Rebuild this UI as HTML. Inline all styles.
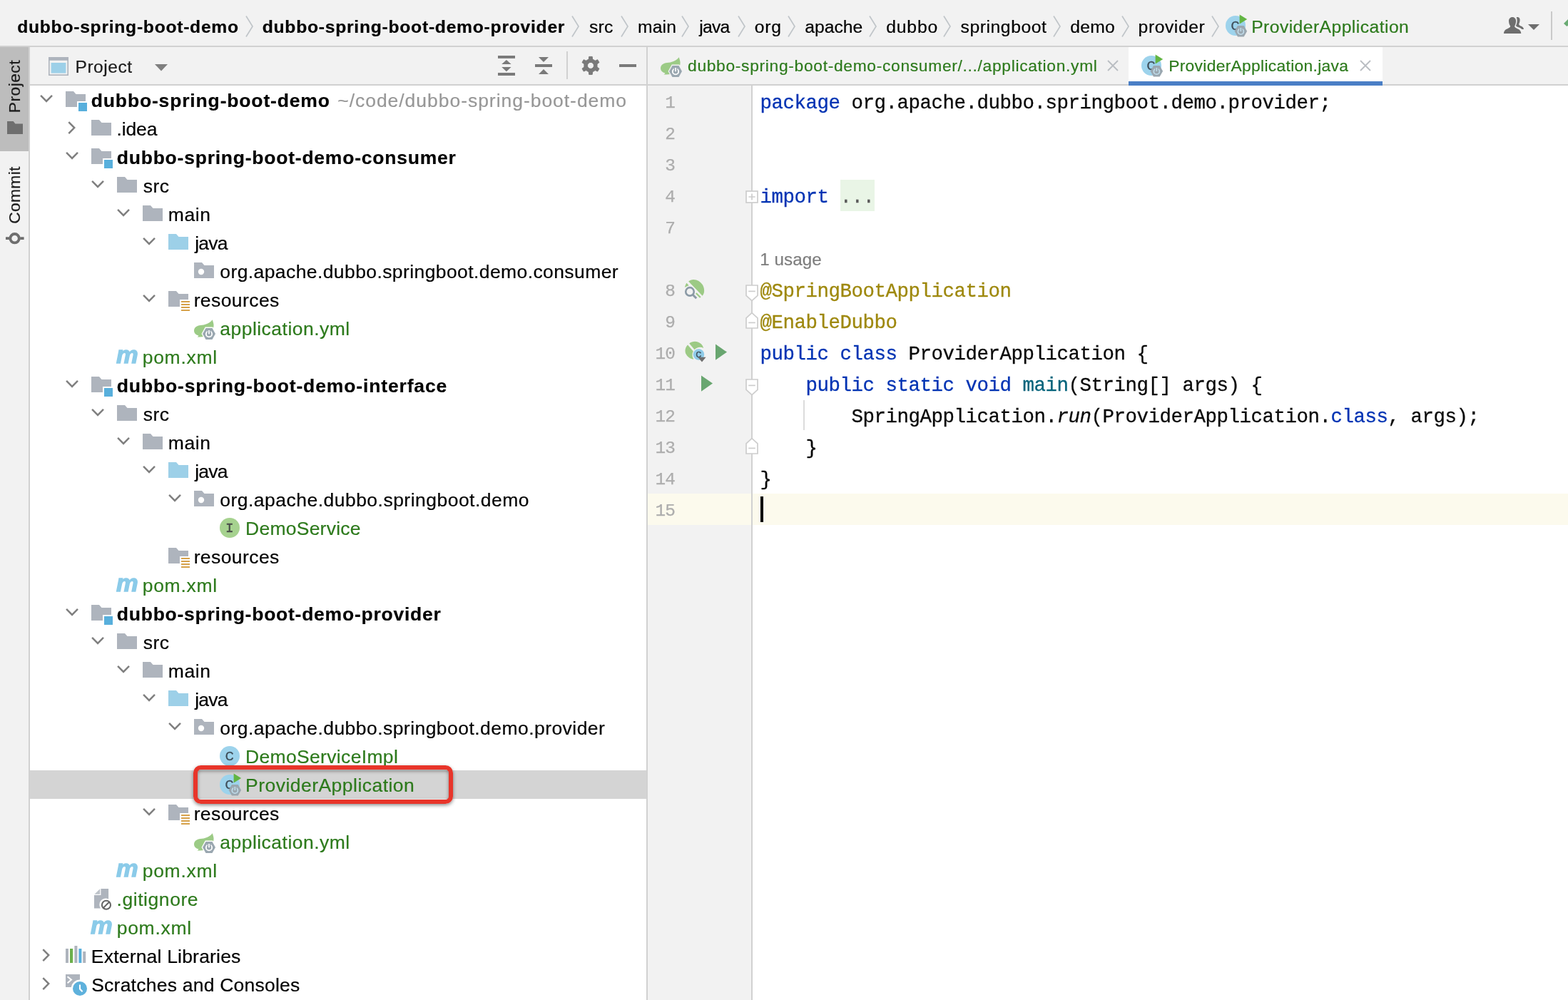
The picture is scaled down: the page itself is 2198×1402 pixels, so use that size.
<!DOCTYPE html>
<html lang="en"><head><meta charset="utf-8"><title>dubbo-spring-boot-demo – ProviderApplication.java</title>
<style>
html,body{margin:0;padding:0}
body{width:2198px;height:1402px;position:relative;overflow:hidden;background:#fff;font-family:"Liberation Sans",sans-serif;}
#r{position:absolute;left:0;top:0;width:2198px;height:1402px;overflow:hidden;will-change:transform}
#r>div,#r>span,#r>svg{position:absolute;display:block}
.t{white-space:pre;line-height:40px;height:40px;-webkit-text-stroke:0.2px}
.c,.n{white-space:pre;line-height:44px;height:44px;font-family:"Liberation Mono",monospace;font-size:27.4px;letter-spacing:-0.435px}
.c span{-webkit-text-stroke:0.3px}
.n{color:#adadad;-webkit-text-stroke:0.25px;font-size:24.4px;letter-spacing:-0.743px}
svg{overflow:visible}
</style></head><body><div id="r">
<div style="left:0px;top:0px;width:2198px;height:64px;background:#f2f2f2;"></div>
<div style="left:0px;top:64px;width:2198px;height:2px;background:#d1d1d1;"></div>
<div style="left:0px;top:66px;width:40px;height:1336px;background:#f2f2f2;"></div>
<div style="left:0px;top:66px;width:40px;height:146px;background:#bdbdbd;"></div>
<div style="left:40px;top:66px;width:2px;height:1336px;background:#d1d1d1;"></div>
<div style="left:42px;top:66px;width:864px;height:52px;background:#f2f2f2;"></div>
<div style="left:42px;top:118px;width:864px;height:2px;background:#d1d1d1;"></div>
<div style="left:906px;top:66px;width:2px;height:1336px;background:#d1d1d1;"></div>
<div style="left:908px;top:66px;width:1290px;height:52px;background:#f2f2f2;"></div>
<div style="left:908px;top:118px;width:1290px;height:2px;background:#d1d1d1;"></div>
<div style="left:1582px;top:66px;width:356px;height:48px;background:#fff;"></div>
<div style="left:1582px;top:114px;width:356px;height:6px;background:#4a7fc6;"></div>
<div style="left:908px;top:120px;width:145px;height:1282px;background:#f2f2f2;"></div>
<div style="left:1053px;top:120px;width:2px;height:1282px;background:#d1d1d1;"></div>
<div style="left:908px;top:692px;width:145px;height:44px;background:#fcfaed;"></div>
<div style="left:1055px;top:692px;width:1143px;height:44px;background:#fcfaed;"></div>
<div style="left:1066px;top:696px;width:4px;height:36px;background:#000;"></div>
<span class="t" style="left:24.19px;top:17.80px;font-size:24.7px;letter-spacing:0.720px;color:#000;font-weight:700;">dubbo-spring-boot-demo</span>
<svg style="left:344px;top:22px;" width="11" height="30" viewBox="0 0 11 30"><path d="M1 0.5 L10 15 L1 29.5" fill="none" stroke="#c0c5c9" stroke-width="1.7"/></svg>
<span class="t" style="left:367.69px;top:17.80px;font-size:24.7px;letter-spacing:0.733px;color:#000;font-weight:700;">dubbo-spring-boot-demo-provider</span>
<svg style="left:801.2px;top:22px;" width="11" height="30" viewBox="0 0 11 30"><path d="M1 0.5 L10 15 L1 29.5" fill="none" stroke="#c0c5c9" stroke-width="1.7"/></svg>
<span class="t" style="left:826.01px;top:17.80px;font-size:24.7px;letter-spacing:0.257px;color:#000;">src</span>
<svg style="left:870px;top:22px;" width="11" height="30" viewBox="0 0 11 30"><path d="M1 0.5 L10 15 L1 29.5" fill="none" stroke="#c0c5c9" stroke-width="1.7"/></svg>
<span class="t" style="left:894.06px;top:17.80px;font-size:24.7px;letter-spacing:0.103px;color:#000;">main</span>
<svg style="left:955.4px;top:22px;" width="11" height="30" viewBox="0 0 11 30"><path d="M1 0.5 L10 15 L1 29.5" fill="none" stroke="#c0c5c9" stroke-width="1.7"/></svg>
<span class="t" style="left:980.30px;top:17.80px;font-size:24.7px;letter-spacing:-0.772px;color:#000;">java</span>
<svg style="left:1034px;top:22px;" width="11" height="30" viewBox="0 0 11 30"><path d="M1 0.5 L10 15 L1 29.5" fill="none" stroke="#c0c5c9" stroke-width="1.7"/></svg>
<span class="t" style="left:1057.66px;top:17.80px;font-size:24.7px;letter-spacing:0.815px;color:#000;">org</span>
<svg style="left:1103.6px;top:22px;" width="11" height="30" viewBox="0 0 11 30"><path d="M1 0.5 L10 15 L1 29.5" fill="none" stroke="#c0c5c9" stroke-width="1.7"/></svg>
<span class="t" style="left:1128.15px;top:17.80px;font-size:24.7px;letter-spacing:0.042px;color:#000;">apache</span>
<svg style="left:1218px;top:22px;" width="11" height="30" viewBox="0 0 11 30"><path d="M1 0.5 L10 15 L1 29.5" fill="none" stroke="#c0c5c9" stroke-width="1.7"/></svg>
<span class="t" style="left:1242.16px;top:17.80px;font-size:24.7px;letter-spacing:0.872px;color:#000;">dubbo</span>
<svg style="left:1322px;top:22px;" width="11" height="30" viewBox="0 0 11 30"><path d="M1 0.5 L10 15 L1 29.5" fill="none" stroke="#c0c5c9" stroke-width="1.7"/></svg>
<span class="t" style="left:1346.51px;top:17.80px;font-size:24.7px;letter-spacing:0.569px;color:#000;">springboot</span>
<svg style="left:1476px;top:22px;" width="11" height="30" viewBox="0 0 11 30"><path d="M1 0.5 L10 15 L1 29.5" fill="none" stroke="#c0c5c9" stroke-width="1.7"/></svg>
<span class="t" style="left:1500.16px;top:17.80px;font-size:24.7px;letter-spacing:0.296px;color:#000;">demo</span>
<svg style="left:1572px;top:22px;" width="11" height="30" viewBox="0 0 11 30"><path d="M1 0.5 L10 15 L1 29.5" fill="none" stroke="#c0c5c9" stroke-width="1.7"/></svg>
<span class="t" style="left:1595.61px;top:17.80px;font-size:24.7px;letter-spacing:0.552px;color:#000;">provider</span>
<svg style="left:1698px;top:22px;" width="11" height="30" viewBox="0 0 11 30"><path d="M1 0.5 L10 15 L1 29.5" fill="none" stroke="#c0c5c9" stroke-width="1.7"/></svg>
<svg style="left:1718px;top:20px;" width="32" height="34" viewBox="0 0 32 34"><path d="M14 2 A14 14 0 1 0 28 16 L18 16 L18 2.6 A14 14 0 0 0 14 2 Z" fill="#9dd3ec" opacity="0"/><circle cx="14" cy="16" r="14" fill="#9dd3ec"/><text x="13.4" y="21.6" text-anchor="middle" font-family="Liberation Sans, sans-serif" font-size="15.8" fill="#3f4e59" stroke="#3f4e59" stroke-width="0.5">C</text><path d="M19.6 0.4 L30.2 7 L19.6 13.6 Z" fill="#62b543" stroke="#f2f2f2" stroke-width="0"/><g transform="translate(12.6,16) scale(0.97)"><path d="M4.5 0 H13.5 L18 8 L13.5 16 H4.5 L0 8 Z" fill="#9aa7b0"/><circle cx="9" cy="8.4" r="4.15" fill="none" stroke="#bfdcea" stroke-width="1.8"/><path d="M9 2.4 V8.6" stroke="#9aa7b0" stroke-width="4.6"/><path d="M9 3.1 V8.3" stroke="#bfdcea" stroke-width="1.7"/></g></svg>
<span class="t" style="left:1754.17px;top:17.80px;font-size:24.7px;letter-spacing:0.440px;color:#2d7a1c;">ProviderApplication</span>
<svg style="left:2107px;top:23px;" width="30" height="25" viewBox="0 0 30 25"><path d="M18.6 1.3 C19.4 1 20.2 0.9 20.8 1 C22.8 1.2 23.8 3 23.6 5.6 C23.4 8 22.8 9.6 22.2 10.6 C22.2 12 23.2 12.8 25 13.6 C27.4 14.6 28.8 15.8 29 18 H26.4 C25.4 16.8 23.8 16 21.6 15.2 C19.6 14.4 18.4 14 18 13 C18.8 11.4 19.4 9.6 19.6 7 C19.8 4.6 19.4 2.6 18.6 1.3 Z" fill="#6e6e6e"/><path d="M13.07 1 C16.2 1 18.3 3.4 18.1 7 C17.9 10 17.2 12 16.2 13.6 C16.2 15.4 17.4 16.2 20 17.2 C23.4 18.4 25 20.4 25.3 23.9 H0.9 C1.2 20.4 2.8 18.4 6.2 17.2 C8.8 16.2 10.2 15.4 10.2 13.6 C9 12 8.2 10 8 7 C7.8 3.4 9.9 1 13.07 1 Z" fill="#6e6e6e" stroke="#f2f2f2" stroke-width="1.1" paint-order="stroke"/></svg>
<svg style="left:2142px;top:34px;" width="16" height="8" viewBox="0 0 16 8"><path d="M0 0 H16 L8 8 Z" fill="#6e6e6e"/></svg>
<div style="left:2174px;top:16px;width:2px;height:40px;background:#c9c9c9;"></div>
<svg style="left:2190px;top:26px;" width="9" height="12" viewBox="0 0 9 12"><path d="M2 7.1 L8.5 0.6 V9.2 L6.4 11.1 Z" fill="#6aab73"/></svg>
<span class="t" style="left:0;top:0;transform-origin:0 0;transform:translate(0px,158.17px) rotate(-90deg);font-size:22.8px;letter-spacing:0.463px;color:#1a1a1a;line-height:40px;height:40px">Project</span>
<svg style="left:10px;top:170px;" width="22" height="18" viewBox="0 0 22 18"><path d="M0 0 H8.6 L11.4 3.6 H22 V18 H0 Z" fill="#6e6e6e"/></svg>
<span class="t" style="left:0;top:0;transform-origin:0 0;transform:translate(0px,313.66px) rotate(-90deg);font-size:22.8px;letter-spacing:0.299px;color:#1a1a1a;line-height:40px;height:40px">Commit</span>
<svg style="left:8px;top:326px;" width="26" height="16" viewBox="0 0 26 16"><circle cx="12.6" cy="8.2" r="6.2" fill="none" stroke="#6e6e6e" stroke-width="3.8"/><path d="M0 8.2 H5 M20.2 8.2 H25.6" stroke="#6e6e6e" stroke-width="3.8"/></svg>
<svg style="left:68px;top:80px;" width="28" height="26" viewBox="0 0 28 26"><rect x="0" y="0" width="28" height="26" fill="#aeb4bd"/><rect x="1.6" y="4.8" width="24.8" height="19.6" fill="#f2f2f2"/><rect x="3.6" y="8" width="20.8" height="14.6" fill="#9dd0e8"/></svg>
<span class="t" style="left:105.48px;top:73.80px;font-size:24.6px;letter-spacing:0.523px;color:#1a1a1a;">Project</span>
<svg style="left:217px;top:90px;" width="18" height="10" viewBox="0 0 18 10"><path d="M0 0 H18 L9 9.4 Z" fill="#7f7f7f"/></svg>
<svg style="left:698px;top:78px;" width="24" height="28" viewBox="0 0 24 28"><rect x="0" y="0" width="24" height="3.9" fill="#7a7a7a"/><rect x="0" y="24" width="24" height="4" fill="#7a7a7a"/><path d="M5.2 12.1 L11.9 5.9 L18.6 12.1 Z M5.2 16 L11.9 22.2 L18.6 16 Z" fill="#7a7a7a"/></svg>
<svg style="left:750px;top:78px;" width="24" height="28" viewBox="0 0 24 28"><rect x="0" y="12" width="24" height="4" fill="#7a7a7a"/><path d="M5 1.9 H19 L12 8.9 Z M5 26 H19 L12 19.1 Z" fill="#7a7a7a"/></svg>
<div style="left:794px;top:72px;width:2px;height:39px;background:#d1d1d1;"></div>
<svg style="left:815px;top:79px;" width="26" height="26" viewBox="0 0 26 26"><path d="M10.71 0.40 L15.21 0.40 L15.55 3.97 L19.40 6.19 L22.66 4.70 L24.91 8.60 L21.99 10.68 L21.99 15.12 L24.91 17.20 L22.66 21.10 L19.40 19.61 L15.55 21.83 L15.21 25.40 L10.71 25.40 L10.37 21.83 L6.52 19.61 L3.26 21.10 L1.01 17.20 L3.93 15.12 L3.93 10.68 L1.01 8.60 L3.26 4.70 L6.52 6.19 L10.37 3.97 Z M17.46 12.9 A4.5 4.5 0 1 0 8.46 12.9 A4.5 4.5 0 1 0 17.46 12.9 Z" fill="#7a7a7a" fill-rule="evenodd" stroke="#7a7a7a" stroke-width="1" stroke-linejoin="round"/></svg>
<div style="left:868px;top:90px;width:24px;height:4px;background:#7a7a7a;"></div>
<div style="left:42px;top:1080px;width:864px;height:40px;background:#d4d4d4;"></div>
<svg style="left:56px;top:132px;" width="18" height="14" viewBox="0 0 18 14"><path d="M1.1 1.9 L9.05 9.9 L17 1.9" fill="none" stroke="#7f7f7f" stroke-width="2.5"/></svg>
<svg style="left:92px;top:128px;" width="32" height="30" viewBox="0 0 32 30"><path d="M0 0 H11 L14.5 4 H28 V14 H16 V22 H0 Z" fill="#aeb4bd"/><rect x="18" y="16" width="12" height="12" fill="#58afdc"/></svg>
<span class="t" style="left:127.81px;top:121.00px;font-size:26.5px;letter-spacing:0.842px;color:#000;font-weight:700;">dubbo-spring-boot-demo</span>
<span class="t" style="left:473.21px;top:121.00px;font-size:26.5px;letter-spacing:0.965px;color:#979797;">~/code/dubbo-spring-boot-demo</span>
<svg style="left:94px;top:170px;" width="14" height="18" viewBox="0 0 14 18"><path d="M2.3 1.1 L10.2 9.1 L2.3 17.1" fill="none" stroke="#7f7f7f" stroke-width="2.5"/></svg>
<svg style="left:128px;top:168px;" width="28" height="22" viewBox="0 0 28 22"><path d="M0 0 H11 L14.5 4 H28 V22 H0 Z" fill="#aeb4bd"/></svg>
<span class="t" style="left:163.48px;top:161.00px;font-size:26.5px;letter-spacing:-0.136px;color:#000;">.idea</span>
<svg style="left:92px;top:212px;" width="18" height="14" viewBox="0 0 18 14"><path d="M1.1 1.9 L9.05 9.9 L17 1.9" fill="none" stroke="#7f7f7f" stroke-width="2.5"/></svg>
<svg style="left:128px;top:208px;" width="32" height="30" viewBox="0 0 32 30"><path d="M0 0 H11 L14.5 4 H28 V14 H16 V22 H0 Z" fill="#aeb4bd"/><rect x="18" y="16" width="12" height="12" fill="#58afdc"/></svg>
<span class="t" style="left:163.81px;top:201.00px;font-size:26.5px;letter-spacing:0.769px;color:#000;font-weight:700;">dubbo-spring-boot-demo-consumer</span>
<svg style="left:128px;top:252px;" width="18" height="14" viewBox="0 0 18 14"><path d="M1.1 1.9 L9.05 9.9 L17 1.9" fill="none" stroke="#7f7f7f" stroke-width="2.5"/></svg>
<svg style="left:164px;top:248px;" width="28" height="22" viewBox="0 0 28 22"><path d="M0 0 H11 L14.5 4 H28 V22 H0 Z" fill="#aeb4bd"/></svg>
<span class="t" style="left:200.66px;top:241.00px;font-size:26.5px;letter-spacing:0.556px;color:#000;">src</span>
<svg style="left:164px;top:292px;" width="18" height="14" viewBox="0 0 18 14"><path d="M1.1 1.9 L9.05 9.9 L17 1.9" fill="none" stroke="#7f7f7f" stroke-width="2.5"/></svg>
<svg style="left:200px;top:288px;" width="28" height="22" viewBox="0 0 28 22"><path d="M0 0 H11 L14.5 4 H28 V22 H0 Z" fill="#aeb4bd"/></svg>
<span class="t" style="left:235.64px;top:281.00px;font-size:26.5px;letter-spacing:0.681px;color:#000;">main</span>
<svg style="left:200px;top:332px;" width="18" height="14" viewBox="0 0 18 14"><path d="M1.1 1.9 L9.05 9.9 L17 1.9" fill="none" stroke="#7f7f7f" stroke-width="2.5"/></svg>
<svg style="left:236px;top:328px;" width="28" height="22" viewBox="0 0 28 22"><path d="M0 0 H11 L14.5 4 H28 V22 H0 Z" fill="#9dd0e8"/></svg>
<span class="t" style="left:273.25px;top:321.00px;font-size:26.5px;letter-spacing:-0.820px;color:#000;">java</span>
<svg style="left:272px;top:368px;" width="28" height="22" viewBox="0 0 28 22"><path d="M0 0 H11 L14.5 4 H28 V22 H0 Z" fill="#aeb4bd"/><circle cx="10" cy="13" r="4.2" fill="#fff"/></svg>
<span class="t" style="left:308.29px;top:361.00px;font-size:26.5px;letter-spacing:0.405px;color:#000;">org.apache.dubbo.springboot.demo.consumer</span>
<svg style="left:200px;top:412px;" width="18" height="14" viewBox="0 0 18 14"><path d="M1.1 1.9 L9.05 9.9 L17 1.9" fill="none" stroke="#7f7f7f" stroke-width="2.5"/></svg>
<svg style="left:236px;top:408px;" width="32" height="30" viewBox="0 0 32 30"><path d="M0 0 H11 L14.5 4 H28 V12 H16 V22 H0 Z" fill="#aeb4bd"/><rect x="18" y="14" width="12" height="2" fill="#d6a14a"/><rect x="18" y="18" width="12" height="2" fill="#d6a14a"/><rect x="18" y="22" width="12" height="2" fill="#d6a14a"/><rect x="18" y="26" width="12" height="2" fill="#d6a14a"/></svg>
<span class="t" style="left:271.64px;top:401.00px;font-size:26.5px;letter-spacing:0.421px;color:#000;">resources</span>
<svg style="left:272px;top:448px;" width="32" height="30" viewBox="0 0 32 30"><path d="M25.7 0.2 C26.6 3 28.2 6.5 27.4 10.4 C26.5 13 25 15 23 17 L17 23.6 C13 24.6 9 24.4 5.5 24.6 L4.6 24.6 C5.6 24 6.2 23.4 6.4 22.6 C2.5 21.6 0 19 0 15.6 C0.2 11 4 8.6 9 8 C15 7.4 21.6 6 25.7 0.2 Z" fill="#9ccb86"/><g transform="translate(12,11.9) scale(1)"><path d="M4.5 0 H13.5 L18 8 L13.5 16 H4.5 L0 8 Z" fill="#9aa7b0" stroke="#fff" stroke-width="2.6" paint-order="stroke"/><circle cx="9" cy="8.4" r="4.15" fill="none" stroke="#fff" stroke-width="1.8"/><path d="M9 2.4 V8.6" stroke="#9aa7b0" stroke-width="4.6"/><path d="M9 3.1 V8.3" stroke="#fff" stroke-width="1.7"/></g></svg>
<span class="t" style="left:308.27px;top:441.00px;font-size:26.5px;letter-spacing:0.473px;color:#2d7a1c;">application.yml</span>
<span class="t" style="left:163.4px;top:477.8px;font-size:33px;font-weight:700;font-style:italic;color:#8bcbe9;-webkit-text-stroke:1.3px #8bcbe9;letter-spacing:0;transform-origin:0 50%;transform:scaleX(1.045)">m</span>
<span class="t" style="left:199.69px;top:481.00px;font-size:26.5px;letter-spacing:0.726px;color:#2d7a1c;">pom.xml</span>
<svg style="left:92px;top:532px;" width="18" height="14" viewBox="0 0 18 14"><path d="M1.1 1.9 L9.05 9.9 L17 1.9" fill="none" stroke="#7f7f7f" stroke-width="2.5"/></svg>
<svg style="left:128px;top:528px;" width="32" height="30" viewBox="0 0 32 30"><path d="M0 0 H11 L14.5 4 H28 V14 H16 V22 H0 Z" fill="#aeb4bd"/><rect x="18" y="16" width="12" height="12" fill="#58afdc"/></svg>
<span class="t" style="left:163.81px;top:521.00px;font-size:26.5px;letter-spacing:0.863px;color:#000;font-weight:700;">dubbo-spring-boot-demo-interface</span>
<svg style="left:128px;top:572px;" width="18" height="14" viewBox="0 0 18 14"><path d="M1.1 1.9 L9.05 9.9 L17 1.9" fill="none" stroke="#7f7f7f" stroke-width="2.5"/></svg>
<svg style="left:164px;top:568px;" width="28" height="22" viewBox="0 0 28 22"><path d="M0 0 H11 L14.5 4 H28 V22 H0 Z" fill="#aeb4bd"/></svg>
<span class="t" style="left:200.66px;top:561.00px;font-size:26.5px;letter-spacing:0.556px;color:#000;">src</span>
<svg style="left:164px;top:612px;" width="18" height="14" viewBox="0 0 18 14"><path d="M1.1 1.9 L9.05 9.9 L17 1.9" fill="none" stroke="#7f7f7f" stroke-width="2.5"/></svg>
<svg style="left:200px;top:608px;" width="28" height="22" viewBox="0 0 28 22"><path d="M0 0 H11 L14.5 4 H28 V22 H0 Z" fill="#aeb4bd"/></svg>
<span class="t" style="left:235.64px;top:601.00px;font-size:26.5px;letter-spacing:0.681px;color:#000;">main</span>
<svg style="left:200px;top:652px;" width="18" height="14" viewBox="0 0 18 14"><path d="M1.1 1.9 L9.05 9.9 L17 1.9" fill="none" stroke="#7f7f7f" stroke-width="2.5"/></svg>
<svg style="left:236px;top:648px;" width="28" height="22" viewBox="0 0 28 22"><path d="M0 0 H11 L14.5 4 H28 V22 H0 Z" fill="#9dd0e8"/></svg>
<span class="t" style="left:273.25px;top:641.00px;font-size:26.5px;letter-spacing:-0.820px;color:#000;">java</span>
<svg style="left:236px;top:692px;" width="18" height="14" viewBox="0 0 18 14"><path d="M1.1 1.9 L9.05 9.9 L17 1.9" fill="none" stroke="#7f7f7f" stroke-width="2.5"/></svg>
<svg style="left:272px;top:688px;" width="28" height="22" viewBox="0 0 28 22"><path d="M0 0 H11 L14.5 4 H28 V22 H0 Z" fill="#aeb4bd"/><circle cx="10" cy="13" r="4.2" fill="#fff"/></svg>
<span class="t" style="left:308.29px;top:681.00px;font-size:26.5px;letter-spacing:0.477px;color:#000;">org.apache.dubbo.springboot.demo</span>
<svg style="left:308px;top:726px;" width="28" height="28" viewBox="0 0 28 28"><circle cx="14" cy="14" r="14" fill="#a6d28f"/><text x="13.8" y="20.099999999999998" text-anchor="middle" font-family="Liberation Mono, monospace" font-size="18.6" fill="#4b504b" stroke="#4b504b" stroke-width="0.6">I</text></svg>
<span class="t" style="left:344.03px;top:721.00px;font-size:26.5px;letter-spacing:0.250px;color:#2d7a1c;">DemoService</span>
<svg style="left:236px;top:768px;" width="32" height="30" viewBox="0 0 32 30"><path d="M0 0 H11 L14.5 4 H28 V12 H16 V22 H0 Z" fill="#aeb4bd"/><rect x="18" y="14" width="12" height="2" fill="#d6a14a"/><rect x="18" y="18" width="12" height="2" fill="#d6a14a"/><rect x="18" y="22" width="12" height="2" fill="#d6a14a"/><rect x="18" y="26" width="12" height="2" fill="#d6a14a"/></svg>
<span class="t" style="left:271.64px;top:761.00px;font-size:26.5px;letter-spacing:0.421px;color:#000;">resources</span>
<span class="t" style="left:163.4px;top:797.8px;font-size:33px;font-weight:700;font-style:italic;color:#8bcbe9;-webkit-text-stroke:1.3px #8bcbe9;letter-spacing:0;transform-origin:0 50%;transform:scaleX(1.045)">m</span>
<span class="t" style="left:199.69px;top:801.00px;font-size:26.5px;letter-spacing:0.726px;color:#2d7a1c;">pom.xml</span>
<svg style="left:92px;top:852px;" width="18" height="14" viewBox="0 0 18 14"><path d="M1.1 1.9 L9.05 9.9 L17 1.9" fill="none" stroke="#7f7f7f" stroke-width="2.5"/></svg>
<svg style="left:128px;top:848px;" width="32" height="30" viewBox="0 0 32 30"><path d="M0 0 H11 L14.5 4 H28 V14 H16 V22 H0 Z" fill="#aeb4bd"/><rect x="18" y="16" width="12" height="12" fill="#58afdc"/></svg>
<span class="t" style="left:163.81px;top:841.00px;font-size:26.5px;letter-spacing:0.756px;color:#000;font-weight:700;">dubbo-spring-boot-demo-provider</span>
<svg style="left:128px;top:892px;" width="18" height="14" viewBox="0 0 18 14"><path d="M1.1 1.9 L9.05 9.9 L17 1.9" fill="none" stroke="#7f7f7f" stroke-width="2.5"/></svg>
<svg style="left:164px;top:888px;" width="28" height="22" viewBox="0 0 28 22"><path d="M0 0 H11 L14.5 4 H28 V22 H0 Z" fill="#aeb4bd"/></svg>
<span class="t" style="left:200.66px;top:881.00px;font-size:26.5px;letter-spacing:0.556px;color:#000;">src</span>
<svg style="left:164px;top:932px;" width="18" height="14" viewBox="0 0 18 14"><path d="M1.1 1.9 L9.05 9.9 L17 1.9" fill="none" stroke="#7f7f7f" stroke-width="2.5"/></svg>
<svg style="left:200px;top:928px;" width="28" height="22" viewBox="0 0 28 22"><path d="M0 0 H11 L14.5 4 H28 V22 H0 Z" fill="#aeb4bd"/></svg>
<span class="t" style="left:235.64px;top:921.00px;font-size:26.5px;letter-spacing:0.681px;color:#000;">main</span>
<svg style="left:200px;top:972px;" width="18" height="14" viewBox="0 0 18 14"><path d="M1.1 1.9 L9.05 9.9 L17 1.9" fill="none" stroke="#7f7f7f" stroke-width="2.5"/></svg>
<svg style="left:236px;top:968px;" width="28" height="22" viewBox="0 0 28 22"><path d="M0 0 H11 L14.5 4 H28 V22 H0 Z" fill="#9dd0e8"/></svg>
<span class="t" style="left:273.25px;top:961.00px;font-size:26.5px;letter-spacing:-0.820px;color:#000;">java</span>
<svg style="left:236px;top:1012px;" width="18" height="14" viewBox="0 0 18 14"><path d="M1.1 1.9 L9.05 9.9 L17 1.9" fill="none" stroke="#7f7f7f" stroke-width="2.5"/></svg>
<svg style="left:272px;top:1008px;" width="28" height="22" viewBox="0 0 28 22"><path d="M0 0 H11 L14.5 4 H28 V22 H0 Z" fill="#aeb4bd"/><circle cx="10" cy="13" r="4.2" fill="#fff"/></svg>
<span class="t" style="left:308.29px;top:1001.00px;font-size:26.5px;letter-spacing:0.451px;color:#000;">org.apache.dubbo.springboot.demo.provider</span>
<svg style="left:308px;top:1046px;" width="28" height="28" viewBox="0 0 28 28"><circle cx="14" cy="14" r="14" fill="#9dd3ec"/><text x="13.6" y="19.6" text-anchor="middle" font-family="Liberation Sans, sans-serif" font-size="15.8" fill="#3f4e59" stroke="#3f4e59" stroke-width="0.5">C</text></svg>
<span class="t" style="left:344.03px;top:1041.00px;font-size:26.5px;letter-spacing:0.331px;color:#2d7a1c;">DemoServiceImpl</span>
<svg style="left:308px;top:1084px;" width="32" height="34" viewBox="0 0 32 34"><path d="M14 2 A14 14 0 1 0 28 16 L18 16 L18 2.6 A14 14 0 0 0 14 2 Z" fill="#9dd3ec" opacity="0"/><circle cx="14" cy="16" r="14" fill="#9dd3ec"/><text x="13.4" y="21.6" text-anchor="middle" font-family="Liberation Sans, sans-serif" font-size="15.8" fill="#3f4e59" stroke="#3f4e59" stroke-width="0.5">C</text><path d="M19.6 0.4 L30.2 7 L19.6 13.6 Z" fill="#62b543" stroke="#f2f2f2" stroke-width="0"/><g transform="translate(12.6,16) scale(0.97)"><path d="M4.5 0 H13.5 L18 8 L13.5 16 H4.5 L0 8 Z" fill="#9aa7b0"/><circle cx="9" cy="8.4" r="4.15" fill="none" stroke="#bfdcea" stroke-width="1.8"/><path d="M9 2.4 V8.6" stroke="#9aa7b0" stroke-width="4.6"/><path d="M9 3.1 V8.3" stroke="#bfdcea" stroke-width="1.7"/></g></svg>
<span class="t" style="left:344.03px;top:1081.00px;font-size:26.5px;letter-spacing:0.471px;color:#2d7a1c;">ProviderApplication</span>
<svg style="left:200px;top:1132px;" width="18" height="14" viewBox="0 0 18 14"><path d="M1.1 1.9 L9.05 9.9 L17 1.9" fill="none" stroke="#7f7f7f" stroke-width="2.5"/></svg>
<svg style="left:236px;top:1128px;" width="32" height="30" viewBox="0 0 32 30"><path d="M0 0 H11 L14.5 4 H28 V12 H16 V22 H0 Z" fill="#aeb4bd"/><rect x="18" y="14" width="12" height="2" fill="#d6a14a"/><rect x="18" y="18" width="12" height="2" fill="#d6a14a"/><rect x="18" y="22" width="12" height="2" fill="#d6a14a"/><rect x="18" y="26" width="12" height="2" fill="#d6a14a"/></svg>
<span class="t" style="left:271.64px;top:1121.00px;font-size:26.5px;letter-spacing:0.421px;color:#000;">resources</span>
<svg style="left:272px;top:1168px;" width="32" height="30" viewBox="0 0 32 30"><path d="M25.7 0.2 C26.6 3 28.2 6.5 27.4 10.4 C26.5 13 25 15 23 17 L17 23.6 C13 24.6 9 24.4 5.5 24.6 L4.6 24.6 C5.6 24 6.2 23.4 6.4 22.6 C2.5 21.6 0 19 0 15.6 C0.2 11 4 8.6 9 8 C15 7.4 21.6 6 25.7 0.2 Z" fill="#9ccb86"/><g transform="translate(12,11.9) scale(1)"><path d="M4.5 0 H13.5 L18 8 L13.5 16 H4.5 L0 8 Z" fill="#9aa7b0" stroke="#fff" stroke-width="2.6" paint-order="stroke"/><circle cx="9" cy="8.4" r="4.15" fill="none" stroke="#fff" stroke-width="1.8"/><path d="M9 2.4 V8.6" stroke="#9aa7b0" stroke-width="4.6"/><path d="M9 3.1 V8.3" stroke="#fff" stroke-width="1.7"/></g></svg>
<span class="t" style="left:308.27px;top:1161.00px;font-size:26.5px;letter-spacing:0.473px;color:#2d7a1c;">application.yml</span>
<span class="t" style="left:163.4px;top:1197.8px;font-size:33px;font-weight:700;font-style:italic;color:#8bcbe9;-webkit-text-stroke:1.3px #8bcbe9;letter-spacing:0;transform-origin:0 50%;transform:scaleX(1.045)">m</span>
<span class="t" style="left:199.69px;top:1201.00px;font-size:26.5px;letter-spacing:0.726px;color:#2d7a1c;">pom.xml</span>
<svg style="left:132px;top:1246.2px;" width="26" height="30" viewBox="0 0 26 30"><path d="M9.4 0 H20.1 V14.6 A8.7 8.7 0 0 0 9 27.4 H0 V9 H9.4 Z" fill="#aeb4bd"/><path d="M0.4 7.7 H8.1 V0.3 Z" fill="#aeb4bd" opacity=".8"/><circle cx="16.95" cy="22.7" r="6.05" fill="none" stroke="#646464" stroke-width="2"/><path d="M12.7 26.95 L21.2 18.45" stroke="#646464" stroke-width="2"/></svg>
<span class="t" style="left:163.48px;top:1241.00px;font-size:26.5px;letter-spacing:0.565px;color:#2d7a1c;">.gitignore</span>
<span class="t" style="left:127.4px;top:1277.8px;font-size:33px;font-weight:700;font-style:italic;color:#8bcbe9;-webkit-text-stroke:1.3px #8bcbe9;letter-spacing:0;transform-origin:0 50%;transform:scaleX(1.045)">m</span>
<span class="t" style="left:163.69px;top:1281.00px;font-size:26.5px;letter-spacing:0.726px;color:#2d7a1c;">pom.xml</span>
<svg style="left:58px;top:1330px;" width="14" height="18" viewBox="0 0 14 18"><path d="M2.3 1.1 L10.2 9.1 L2.3 17.1" fill="none" stroke="#7f7f7f" stroke-width="2.5"/></svg>
<svg style="left:92px;top:1326px;" width="30" height="26" viewBox="0 0 30 26"><rect x="0" y="4" width="4" height="20" fill="#aeb4bd"/><rect x="6" y="4" width="4.2" height="20" fill="#6cb04c"/><rect x="12.4" y="0" width="4" height="24" fill="#aeb4bd"/><rect x="18.4" y="4" width="4" height="20" fill="#58afdc"/><rect x="24.2" y="8" width="4" height="16" fill="#aeb4bd"/></svg>
<span class="t" style="left:127.83px;top:1321.00px;font-size:26.5px;letter-spacing:0.196px;color:#000;">External Libraries</span>
<svg style="left:58px;top:1370px;" width="14" height="18" viewBox="0 0 14 18"><path d="M2.3 1.1 L10.2 9.1 L2.3 17.1" fill="none" stroke="#7f7f7f" stroke-width="2.5"/></svg>
<svg style="left:92px;top:1366px;" width="32" height="32" viewBox="0 0 32 32"><path d="M0 0 H20 V7.6 A12 12 0 0 0 7.8 18 H0 Z" fill="#aeb4bd"/><path d="M2.6 3.2 L8 7.6 L2.6 12.2" fill="none" stroke="#fff" stroke-width="2"/><circle cx="20" cy="20" r="10" fill="#5eb1dc"/><path d="M20 14.6 V20.6 L23.6 24.2" fill="none" stroke="#fff" stroke-width="2.1"/></svg>
<span class="t" style="left:128.20px;top:1361.00px;font-size:26.5px;letter-spacing:0.234px;color:#000;">Scratches and Consoles</span>
<div style="left:271.4px;top:1072.8px;width:351.8px;height:42.2px;border:6.2px solid #e8352a;border-radius:10.5px;box-shadow:0 2px 5px rgba(0,0,0,.45), inset 0 2px 5px rgba(0,0,0,.4)"></div>
<svg style="left:926px;top:80px;" width="32" height="30" viewBox="0 0 32 30"><path d="M25.7 0.2 C26.6 3 28.2 6.5 27.4 10.4 C26.5 13 25 15 23 17 L17 23.6 C13 24.6 9 24.4 5.5 24.6 L4.6 24.6 C5.6 24 6.2 23.4 6.4 22.6 C2.5 21.6 0 19 0 15.6 C0.2 11 4 8.6 9 8 C15 7.4 21.6 6 25.7 0.2 Z" fill="#9ccb86"/><g transform="translate(12,11.9) scale(1)"><path d="M4.5 0 H13.5 L18 8 L13.5 16 H4.5 L0 8 Z" fill="#9aa7b0" stroke="#f2f2f2" stroke-width="2.6" paint-order="stroke"/><circle cx="9" cy="8.4" r="4.15" fill="none" stroke="#fff" stroke-width="1.8"/><path d="M9 2.4 V8.6" stroke="#9aa7b0" stroke-width="4.6"/><path d="M9 3.1 V8.3" stroke="#fff" stroke-width="1.7"/></g></svg>
<span class="t" style="left:964.04px;top:72.20px;font-size:22.8px;letter-spacing:0.682px;color:#2d7a1c;">dubbo-spring-boot-demo-consumer/.../application.yml</span>
<svg style="left:1551.6px;top:84px;" width="16" height="16" viewBox="0 0 16 16"><path d="M1 1 L15 15 M15 1 L1 15" stroke="#b9bdc2" stroke-width="1.8" fill="none"/></svg>
<svg style="left:1600px;top:76px;" width="32" height="34" viewBox="0 0 32 34"><path d="M14 2 A14 14 0 1 0 28 16 L18 16 L18 2.6 A14 14 0 0 0 14 2 Z" fill="#9dd3ec" opacity="0"/><circle cx="14" cy="16" r="14" fill="#9dd3ec"/><text x="13.4" y="21.6" text-anchor="middle" font-family="Liberation Sans, sans-serif" font-size="15.8" fill="#3f4e59" stroke="#3f4e59" stroke-width="0.5">C</text><path d="M19.6 0.4 L30.2 7 L19.6 13.6 Z" fill="#62b543" stroke="#f2f2f2" stroke-width="0"/><g transform="translate(12.6,16) scale(0.97)"><path d="M4.5 0 H13.5 L18 8 L13.5 16 H4.5 L0 8 Z" fill="#9aa7b0"/><circle cx="9" cy="8.4" r="4.15" fill="none" stroke="#bfdcea" stroke-width="1.8"/><path d="M9 2.4 V8.6" stroke="#9aa7b0" stroke-width="4.6"/><path d="M9 3.1 V8.3" stroke="#bfdcea" stroke-width="1.7"/></g></svg>
<span class="t" style="left:1638.13px;top:72.20px;font-size:22.8px;letter-spacing:0.316px;color:#2d7a1c;">ProviderApplication.java</span>
<svg style="left:1906px;top:84px;" width="16" height="16" viewBox="0 0 16 16"><path d="M1 1 L15 15 M15 1 L1 15" stroke="#b9bdc2" stroke-width="1.8" fill="none"/></svg>
<span class="n" style="left:932.30px;top:123px">1</span>
<span class="n" style="left:932.30px;top:167px">2</span>
<span class="n" style="left:932.30px;top:211px">3</span>
<span class="n" style="left:932.30px;top:255px">4</span>
<span class="n" style="left:932.30px;top:299px">7</span>
<span class="n" style="left:932.30px;top:387px">8</span>
<span class="n" style="left:932.30px;top:431px">9</span>
<span class="n" style="left:918.40px;top:475px">10</span>
<span class="n" style="left:918.40px;top:519px">11</span>
<span class="n" style="left:918.40px;top:563px">12</span>
<span class="n" style="left:918.40px;top:607px">13</span>
<span class="n" style="left:918.40px;top:651px">14</span>
<span class="n" style="left:918.40px;top:695px">15</span>
<span class="c" style="left:1065.4px;top:122.5px"><span style="color:#0033b3;">package</span><span style="color:#080808;"> org.apache.dubbo.springboot.demo.provider;</span></span>
<div style="left:1178px;top:252px;width:48px;height:44px;background:#e9f5e6;"></div>
<span class="c" style="left:1065.4px;top:254.5px"><span style="color:#0033b3;">import</span><span style="color:#080808;"> </span><span style="color:#5a5a5a;">...</span></span>
<span class="t" style="left:1065.16px;top:344.00px;font-size:24.2px;letter-spacing:0.067px;color:#7d7d7d;">1 usage</span>
<span class="c" style="left:1065.4px;top:386.5px"><span style="color:#9e880d;">@SpringBootApplication</span></span>
<span class="c" style="left:1065.4px;top:430.5px"><span style="color:#9e880d;">@EnableDubbo</span></span>
<span class="c" style="left:1065.4px;top:474.5px"><span style="color:#0033b3;">public</span><span style="color:#080808;"> </span><span style="color:#0033b3;">class</span><span style="color:#080808;"> ProviderApplication {</span></span>
<span class="c" style="left:1065.4px;top:518.5px"><span style="color:#080808;">    </span><span style="color:#0033b3;">public</span><span style="color:#080808;"> </span><span style="color:#0033b3;">static</span><span style="color:#080808;"> </span><span style="color:#0033b3;">void</span><span style="color:#080808;"> </span><span style="color:#00627a;">main</span><span style="color:#080808;">(String[] args) {</span></span>
<span class="c" style="left:1065.4px;top:562.5px"><span style="color:#080808;">        SpringApplication.</span><span style="color:#080808;font-style:italic;">run</span><span style="color:#080808;">(ProviderApplication.</span><span style="color:#0033b3;">class</span><span style="color:#080808;">, args);</span></span>
<span class="c" style="left:1065.4px;top:606.5px"><span style="color:#080808;">    }</span></span>
<span class="c" style="left:1065.4px;top:650.5px"><span style="color:#080808;">}</span></span>
<div style="left:1126px;top:561px;width:2px;height:42px;background:#dcdcdc;"></div>
<svg style="left:960px;top:391px;" width="30" height="30" viewBox="0 0 30 30"><path d="M5.1 3.4 C7 2 9.4 1 11.8 0.9 C17 0.7 22 3.6 25 8.6 C27 12 27.6 16 26.8 19.6 C26.4 21.2 25.6 22.6 24.7 23.7 Z" fill="#9cca85"/><path d="M2.5 5.7 L5.7 9.2 C3.6 9.8 1.6 10.8 0 12 C0.4 9.6 1.2 7.4 2.5 5.7 Z" fill="#9cca85"/><path d="M15.8 20 L21.8 26" stroke="#9cca85" stroke-width="2.2"/><circle cx="7" cy="17.9" r="5.75" fill="none" stroke="#8b9aa6" stroke-width="2.6"/><path d="M11.2 22.2 L16.2 27.2" stroke="#8b9aa6" stroke-width="3"/></svg>
<svg style="left:960px;top:477.5px;" width="32" height="32" viewBox="0 0 32 32"><path d="M6.2 3.4 C11 -0.4 18.6 -0.2 23.2 4.6 C24.6 6.2 25.6 8 26.2 10 C22 7.6 16.6 8.6 13.6 12.2 L6.2 3.4 Z" fill="#9cca85"/><path d="M4 5.4 L11.8 14.6 C9.8 18 10 22.4 12.4 25.6 C8.4 25.4 4.4 23 2 19 C-0.6 14.6 0.4 9 4 5.4 Z" fill="#9cca85"/><circle cx="19.4" cy="19" r="7.8" fill="#8fcbe8"/><text x="19.2" y="22.6" text-anchor="middle" font-family="Liberation Sans, sans-serif" font-size="10.5" fill="#3f4e59" stroke="#3f4e59" stroke-width="0.5">C</text><path d="M18.2 22.8 H29.6 L24 29.4 Z" fill="#6e6e6e"/></svg>
<svg style="left:1002.7px;top:482px;" width="16" height="24" viewBox="0 0 16 24"><path d="M0 0.4 L16 11.6 L0 22.8 Z" fill="#69a670"/></svg>
<svg style="left:982.8px;top:526px;" width="16" height="24" viewBox="0 0 16 24"><path d="M0 0.4 L16 11.6 L0 22.8 Z" fill="#69a670"/></svg>
<svg style="left:1045px;top:267.0px;" width="18" height="18" viewBox="0 0 18 18"><rect x="1" y="1" width="16" height="16" fill="#fff" stroke="#cdcdcd" stroke-width="1.7"/><path d="M4.4 9 H13.6 M9 4.4 V13.6" stroke="#cdcdcd" stroke-width="1.7"/></svg>
<svg style="left:1045px;top:398.6px;" width="18" height="25" viewBox="0 0 18 25"><path d="M1 1 H17 V15.4 L9 22.6 L1 15.4 Z" fill="#fff" stroke="#cdcdcd" stroke-width="1.7"/><path d="M4.2 9.4 H13.8" stroke="#cdcdcd" stroke-width="1.7"/></svg>
<svg style="left:1045px;top:435.5px;" width="18" height="25" viewBox="0 0 18 25"><path d="M1 24 H17 V9.8 L9 2.6 L1 9.8 Z" fill="#fff" stroke="#cdcdcd" stroke-width="1.7"/><path d="M4.2 16.4 H13.8" stroke="#cdcdcd" stroke-width="1.7"/></svg>
<svg style="left:1045px;top:530.6px;" width="18" height="25" viewBox="0 0 18 25"><path d="M1 1 H17 V15.4 L9 22.6 L1 15.4 Z" fill="#fff" stroke="#cdcdcd" stroke-width="1.7"/><path d="M4.2 9.4 H13.8" stroke="#cdcdcd" stroke-width="1.7"/></svg>
<svg style="left:1045px;top:611.5px;" width="18" height="25" viewBox="0 0 18 25"><path d="M1 24 H17 V9.8 L9 2.6 L1 9.8 Z" fill="#fff" stroke="#cdcdcd" stroke-width="1.7"/><path d="M4.2 16.4 H13.8" stroke="#cdcdcd" stroke-width="1.7"/></svg>
</div></body></html>
